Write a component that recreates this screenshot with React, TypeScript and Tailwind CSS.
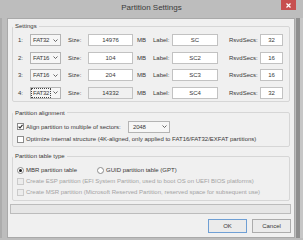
import React from "react";

type Part = {
  n: number;
  fs: string;
  size: string;
  label: string;
  rsvd: string;
  locked?: boolean;
  focused?: boolean;
};

const parts: Part[] = [
  { n: 1, fs: "FAT32", size: "14976", label: "SC", rsvd: "32" },
  { n: 2, fs: "FAT16", size: "104", label: "SC2", rsvd: "16" },
  { n: 3, fs: "FAT16", size: "204", label: "SC3", rsvd: "16" },
  { n: 4, fs: "FAT32", size: "14332", label: "SC4", rsvd: "32", locked: true, focused: true },
];

function Chevron() {
  return (
    <svg width="5" height="3" viewBox="0 0 5 3" className="block flex-none">
      <path d="M0.5 0.5 L2.5 2.5 L4.5 0.5" fill="none" stroke="#555" strokeWidth="0.9" />
    </svg>
  );
}

function Combo({ value, focused, width }: { value: string; focused?: boolean; width: string }) {
  return (
    <div
      className={`flex items-center justify-between h-[12px] pl-[1px] pr-[2px] border border-[#b4b4b4] bg-[#f6f6f6] ${width}`}
    >
      <span
        className={
          focused
            ? "px-[1px] tracking-[-0.2px] outline outline-1 outline-dotted outline-[#444]"
            : "px-[1px] tracking-[-0.2px]"
        }
      >
        {value}
      </span>
      <Chevron />
    </div>
  );
}

function Field({ value, width, locked }: { value: string; width: string; locked?: boolean }) {
  return (
    <div
      className={`flex items-center justify-center h-[12px] border border-[#c2c2c2] ${width} ${
        locked ? "bg-[#f0f0f0]" : "bg-white"
      }`}
    >
      {value}
    </div>
  );
}

function Check({ checked, disabled }: { checked?: boolean; disabled?: boolean }) {
  return (
    <div
      className={`w-[7px] h-[7px] flex-none border ${
        disabled ? "border-[#cbcbcb] bg-[#ececec]" : "border-[#8c8c8c] bg-white"
      }`}
    >
      {checked && (
        <svg width="5" height="5" viewBox="0 0 5 5" className="block">
          <path d="M0.6 2.6 L2 4 L4.5 0.8" fill="none" stroke="#222" strokeWidth="1.1" />
        </svg>
      )}
    </div>
  );
}

function Radio({ checked }: { checked?: boolean }) {
  return (
    <div className="w-[7px] h-[7px] flex-none rounded-full border border-[#8c8c8c] bg-white flex items-center justify-center">
      {checked && <div className="w-[3px] h-[3px] rounded-full bg-[#1e1e1e]" />}
    </div>
  );
}

function Group({ title, className, children }: { title: string; className?: string; children: React.ReactNode }) {
  return (
    <fieldset className={`mx-[4px] border border-[#d6d6d6] rounded-[2px] ${className ?? ""}`}>
      <legend className="px-[2px] leading-[8px]">{title}</legend>
      {children}
    </fieldset>
  );
}

export default function App() {
  return (
    <div className="w-[303px] h-[240px] flex flex-col bg-[#bdbdbd] text-[6px] leading-[8px] text-[#383838] font-['Liberation_Sans',Arial,sans-serif] overflow-hidden">
      {/* title bar */}
      <div className="relative h-[18px] flex-none flex items-center justify-center pb-[2px]">
        <span className="text-[8px] leading-[10px] text-[#3a3a3a]">Partition Settings</span>
        <div className="absolute top-0 right-[7px] w-[15px] h-[10px] bg-[#c75050] flex items-center justify-center">
          <svg width="5" height="5" viewBox="0 0 5 5" className="block">
            <path d="M0.5 0.5 L4.5 4.5 M4.5 0.5 L0.5 4.5" stroke="white" strokeWidth="1.2" />
          </svg>
        </div>
      </div>

      <div className="flex h-[220px] flex-none">
        <div className="w-[7px] flex-none flex">
          <div className="w-[2px] bg-[#acacac]" />
          <div className="flex-1" />
        </div>

        {/* client area */}
        <div className="w-[288px] flex-none border border-[#a9a9a9] bg-[#f0f0f0] flex flex-col pt-[3px]">
          <Group title="Settings">
            <div className="flex flex-col gap-[5.5px] pt-[4px] pb-[2px] pl-[5px]">
              {parts.map((p) => (
                <div key={p.n} className="flex items-center h-[12px]">
                  <span className="w-[12px]">{p.n}:</span>
                  <Combo value={p.fs} focused={p.focused} width="w-[31px]" />
                  <span className="ml-[7px] w-[20px]">Size:</span>
                  <Field value={p.size} width="w-[45px]" locked={p.locked} />
                  <span className="ml-[4px] w-[16px]">MB</span>
                  <span className="w-[19px]">Label:</span>
                  <Field value={p.label} width="w-[46px]" />
                  <span className="ml-[11px] w-[31px]">RsvdSecs:</span>
                  <Field value={p.rsvd} width="w-[23px]" />
                </div>
              ))}
            </div>
          </Group>

          <Group title="Partition alignment" className="mt-[7px]">
            <div className="flex flex-col gap-[2.5px] pt-[4px] pb-[3px] pl-[4px]">
              <div className="flex items-center h-[12px]">
                <Check checked />
                <span className="ml-[2px] w-[102px]">Align partition to multiple of sectors:</span>
                <Combo value="2048" width="w-[42px] pl-[3px]" />
              </div>
              <div className="flex items-center h-[8px]">
                <Check />
                <span className="ml-[2px] whitespace-nowrap">
                  Optimize internal structure (4K-aligned, only applied to FAT16/FAT32/EXFAT partitions)
                </span>
              </div>
            </div>
          </Group>

          <Group title="Partition table type" className="mt-[5px]">
            <div className="flex flex-col gap-[2px] pt-[5.5px] pb-[3.5px] pl-[4px]">
              <div className="flex items-center h-[9px]">
                <Radio checked />
                <span className="ml-[2px] w-[71px]">MBR partition table</span>
                <Radio />
                <span className="ml-[2px]">GUID partition table (GPT)</span>
              </div>
              <div className="flex items-center h-[9px] text-[#a3a3a3]">
                <Check disabled />
                <span className="ml-[2px] whitespace-nowrap">
                  Create ESP partition (EFI System Partition, used to boot OS on UEFI BIOS platforms)
                </span>
              </div>
              <div className="flex items-center h-[9px] text-[#a3a3a3]">
                <Check disabled />
                <span className="ml-[2px] whitespace-nowrap">
                  Create MSR partition (Microsoft Reserved Partition, reserved space for subsequent use)
                </span>
              </div>
            </div>
          </Group>

          <div className="mt-[3px] ml-[2px] mr-[3px] h-[10px] flex-none border border-[#bcbcbc] bg-[#e6e6e6]" />

          <div className="mt-[5px] pr-[3px] flex justify-end gap-[5px]">
            <button className="w-[39px] h-[14px] border border-[#6f9fd4] bg-[#ebebeb] leading-[8px]">OK</button>
            <button className="w-[39px] h-[14px] border border-[#acacac] bg-[#ebebeb] leading-[8px]">Cancel</button>
          </div>
        </div>

        <div className="flex-1 flex">
          <div className="w-[1px]" />
          <div className="w-[4px] bg-[#8f8f8f]" />
          <div className="flex-1 bg-[#c6c6c6]" />
        </div>
      </div>

      <div className="h-[2px] flex-none" />
    </div>
  );
}
